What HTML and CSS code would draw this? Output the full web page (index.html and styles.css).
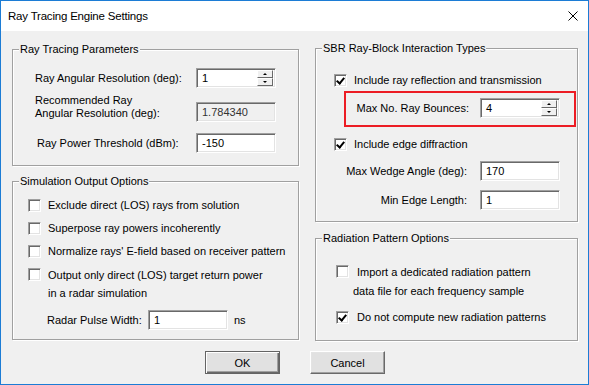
FILE: index.html
```html
<!DOCTYPE HTML>
<html lang="en">
  <head>
    <title>Ray Tracing Engine Settings</title>
    <meta charset="utf-8" />
    <link rel="stylesheet" href="styles.css">
  </head>
  <body>
    <div class='window'>
      <div class='titlebar'>
        <span class='title'>Ray Tracing Engine Settings</span>
        <svg class='close' width='10' height='10' viewBox='0 0 10 10'>
          <path d='M0.5 0.5 L9.5 9.5 M9.5 0.5 L0.5 9.5' stroke='#000' stroke-width='1' fill='none' />
        </svg>
      </div>

      <div class='content'>
        <div class='columns'>
          <div class='col left-col'>
            <div class='group params'>
              <span class='legend'>Ray Tracing Parameters</span>
              <div class='row'>
                <span class='lbl'>Ray Angular Resolution (deg):</span>
                <div class='edit spinbox'>
                  <span class='val'>1</span>
                  <div class='spin'>
                    <div class='spin-btn up'></div>
                    <div class='spin-btn down'></div>
                  </div>
                </div>
              </div>
              <div class='row rec'>
                <span class='lbl'>Recommended Ray<br>Angular Resolution (deg):</span>
                <div class='edit readonly'><span class='val'>1.784340</span></div>
              </div>
              <div class='row power'>
                <span class='lbl'>Ray Power Threshold (dBm):</span>
                <div class='edit'><span class='val'>-150</span></div>
              </div>
            </div>

            <div class='group output'>
              <span class='legend'>Simulation Output Options</span>
              <div class='check'>
                <span class='box'></span>
                <span class='text'>Exclude direct (LOS) rays from solution</span>
              </div>
              <div class='check'>
                <span class='box'></span>
                <span class='text'>Superpose ray powers incoherently</span>
              </div>
              <div class='check'>
                <span class='box'></span>
                <span class='text'>Normalize rays' E-field based on receiver pattern</span>
              </div>
              <div class='check tall'>
                <span class='box'></span>
                <span class='text'>Output only direct (LOS) target return power<br>in a radar simulation</span>
              </div>
              <div class='radar'>
                <span class='lbl'>Radar Pulse Width:</span>
                <div class='edit'><span class='val'>1</span></div>
                <span class='unit'>ns</span>
              </div>
            </div>
          </div>

          <div class='col right-col'>
            <div class='group sbr'>
              <span class='legend'>SBR Ray-Block Interaction Types</span>
              <div class='check'>
                <span class='box checked'></span>
                <span class='text'>Include ray reflection and transmission</span>
              </div>
              <div class='highlight'>
                <span class='lbl'>Max No. Ray Bounces:</span>
                <div class='edit spinbox'>
                  <span class='val'>4</span>
                  <div class='spin'>
                    <div class='spin-btn up'></div>
                    <div class='spin-btn down'></div>
                  </div>
                </div>
              </div>
              <div class='check edge'>
                <span class='box checked'></span>
                <span class='text'>Include edge diffraction</span>
              </div>
              <div class='field wedge'>
                <span class='lbl'>Max Wedge Angle (deg):</span>
                <div class='edit'><span class='val'>170</span></div>
              </div>
              <div class='field length'>
                <span class='lbl'>Min Edge Length:</span>
                <div class='edit'><span class='val'>1</span></div>
              </div>
            </div>

            <div class='group radiation'>
              <span class='legend'>Radiation Pattern Options</span>
              <div class='check pattern'>
                <span class='box'></span>
                <span class='text'>Import a dedicated radiation pattern<br>data file for each frequency sample</span>
              </div>
              <div class='check pattern no-compute'>
                <span class='box checked'></span>
                <span class='text'>Do not compute new radiation patterns</span>
              </div>
            </div>
          </div>
        </div>

        <div class='buttons'>
          <button class='button default'>OK</button>
          <button class='button'>Cancel</button>
        </div>
      </div>
    </div>
  </body>
</html>
```

FILE: styles.css
```css
body {
  margin: 0;
  font-family: "Liberation Sans", Arial, sans-serif;
  font-size: 11px;
  color: #000;
}

.window {
  box-sizing: border-box;
  width: 589px;
  height: 385px;
  border: 1px solid #1c7cd5;
  background-color: #f0f0f0;
  display: flex;
  flex-direction: column;
}

.titlebar {
  height: 30px;
  background-color: #ffffff;
  display: flex;
  align-items: center;
  justify-content: space-between;
  padding: 0 10px 0 7px;
}

.title {
  font-size: 11.5px;
  letter-spacing: -0.2px;
}

.close {
  display: block;
  margin-top: -1px;
}

.content {
  display: flex;
  flex-direction: column;
  padding: 0 10px 0 11px;
}

.columns {
  display: flex;
  gap: 16px;
}

.col {
  display: flex;
  flex-direction: column;
}

.left-col {
  width: 287px;
  padding-top: 18px;
  gap: 15px;
}

.right-col {
  width: 263px;
  padding-top: 17px;
  gap: 16px;
}

/* etched group box */
.group {
  position: relative;
  box-sizing: border-box;
  border: 1px solid #a0a0a0;
  box-shadow: 1px 1px 0 #ffffff, inset 1px 1px 0 #ffffff;
}

.legend {
  position: absolute;
  top: -7px;
  left: 6px;
  padding: 0 1px;
  line-height: 13px;
  background-color: #f0f0f0;
}

/* edit boxes */
.edit {
  box-sizing: border-box;
  width: 80px;
  height: 20px;
  background-color: #ffffff;
  border: 1px solid;
  border-color: #a0a0a0 #ffffff #ffffff #a0a0a0;
  box-shadow: inset 1px 1px 0 #696969, inset -1px -1px 0 #e3e3e3;
  display: flex;
  align-items: center;
  padding-left: 5px;
}

.edit.readonly {
  background-color: #f0f0f0;
  color: #333;
}

.spinbox {
  padding-right: 2px;
  justify-content: space-between;
  align-items: stretch;
}

.spinbox .val {
  align-self: center;
}

.spin {
  width: 16px;
  display: flex;
  flex-direction: column;
  justify-content: space-between;
  padding: 1px 0;
}

.spin-btn {
  box-sizing: border-box;
  height: 8px;
  background-color: #f0f0f0;
  border: 1px solid;
  border-color: #ffffff #696969 #696969 #ffffff;
  position: relative;
}

.spin-btn::after {
  content: '';
  position: absolute;
  left: 5px;
  top: 2px;
  border-left: 2px solid transparent;
  border-right: 2px solid transparent;
}

.spin-btn.up::after {
  border-bottom: 2px solid #000;
}

.spin-btn.down::after {
  border-top: 2px solid #000;
}

/* ray tracing parameters */
.params {
  height: 117px;
  padding: 18px 0 0 22px;
}

.params .row {
  display: flex;
  align-items: center;
  height: 20px;
}

.params .lbl {
  width: 161px;
}

.params .rec {
  margin-top: 6px;
  height: 28px;
  align-items: flex-start;
}

.rec .lbl {
  line-height: 13px;
}

.rec .edit {
  margin-top: 8px;
}

.params .power {
  margin-top: 11px;
}

.power .lbl {
  width: 159px;
  margin-left: 2px;
}

/* checkboxes */
.check {
  display: flex;
  align-items: flex-start;
}

.check .text {
  line-height: 17px;
  margin-left: 7px;
}

.box {
  box-sizing: border-box;
  width: 13px;
  height: 13px;
  margin-top: 2px;
  flex: none;
  background-color: #ffffff;
  border: 1px solid;
  border-color: #a0a0a0 #ffffff #ffffff #a0a0a0;
  box-shadow: inset 1px 1px 0 #696969, inset -1px -1px 0 #e3e3e3;
  position: relative;
}

.box.checked::after {
  content: '';
  position: absolute;
  left: 3px;
  top: 1px;
  width: 3px;
  height: 6px;
  border-right: 2px solid #000;
  border-bottom: 2px solid #000;
  transform: rotate(40deg);
}

/* simulation output */
.output {
  height: 159px;
  padding: 15px 0 0 15px;
}

.output .check + .check {
  margin-top: 6px;
}

.output .tall .text {
  line-height: 18px;
}

.output .tall {
  margin-top: 5px;
}

.radar {
  display: flex;
  align-items: center;
  margin: 8px 0 0 19px;
}

.radar .lbl {
  width: 101px;
}

.radar .unit {
  margin-left: 6px;
}

/* sbr interaction types */
.sbr {
  height: 174px;
  padding: 23px 0 0 18px;
}

.highlight {
  box-sizing: border-box;
  width: 232px;
  height: 36px;
  margin: 2px 0 0 10px;
  border: 2px solid #ec1c24;
  display: flex;
  align-items: flex-start;
  padding-top: 5px;
}

.highlight .lbl {
  width: 123px;
  text-align: right;
  margin-right: 11px;
  line-height: 20px;
}

.edge {
  margin-top: 9px;
}

.field {
  display: flex;
  align-items: center;
}

.field .lbl {
  width: 133px;
  text-align: right;
  margin-right: 13px;
}

.wedge {
  margin-top: 8px;
}

.length {
  margin-top: 9px;
}

/* radiation pattern */
.radiation {
  height: 103px;
  padding: 24px 0 0 20px;
}

.pattern .text {
  margin-left: 4px;
  text-indent: 4px;
  line-height: 19px;
}

.no-compute {
  margin-top: 8px;
}

.no-compute .text {
  line-height: 17px;
}

/* dialog buttons */
.buttons {
  display: flex;
  justify-content: center;
  gap: 30px;
  margin-top: 10px;
}

.button {
  box-sizing: border-box;
  width: 75px;
  height: 23px;
  padding: 0;
  font-family: inherit;
  font-size: 11px;
  color: #000;
  background-color: #e1e1e1;
  border: 1px solid;
  border-color: #ffffff #696969 #696969 #ffffff;
  box-shadow: inset -1px -1px 0 #a0a0a0, inset 1px 1px 0 #e3e3e3;
}

.button.default {
  border: 1px solid #646464;
  box-shadow: inset 1px 1px 0 #ffffff, inset -1px -1px 0 #696969, inset -2px -2px 0 #a0a0a0;
}
```
